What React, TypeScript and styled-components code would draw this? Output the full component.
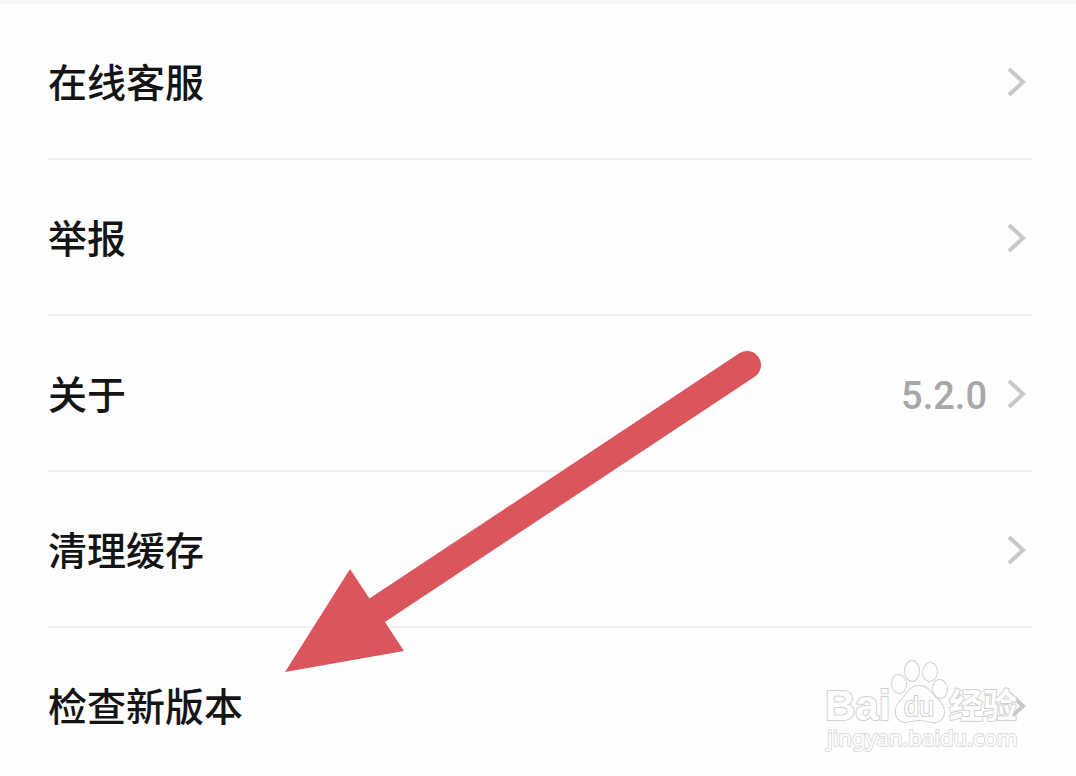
import React from 'react';
import styled, { createGlobalStyle } from 'styled-components';

const GlobalStyle = createGlobalStyle`
  * { box-sizing: border-box; }
  body {
    margin: 0;
    background: #fefefe;
    color: #141414;
    font-family: Roboto, "Noto Sans CJK SC", sans-serif;
  }
`;

const Page = styled.main`
  position: relative;
  min-height: 100vh;
  overflow: hidden;
  border-top: 4px solid #f7f7f7;
`;

const List = styled.ul`
  list-style: none;
  margin: 0;
  padding: 0 44px 0 48px;
`;

const Item = styled.li`
  border-bottom: 2px solid #f0f0f0;

  &:last-child {
    border-bottom: 0;
  }
`;

const RowButton = styled.button`
  display: flex;
  align-items: center;
  width: 100%;
  padding: 46px 5px 48px 0;
  border: 0;
  background: none;
  color: inherit;
  font: inherit;
  text-align: left;
  cursor: pointer;

  ${Item}:last-child & {
    padding-bottom: 36px;
  }
`;

const Label = styled.span`
  flex: 1;
  font-family: "Noto Sans CJK SC", sans-serif;
  font-size: 39px;
  font-weight: 500;
  line-height: 60px;
`;

const Value = styled.span`
  margin-right: 20px;
  padding-top: 8px;
  color: #a8a8a8;
  font-size: 38px;
  font-weight: 500;
  line-height: 52px;
`;

const Chevron = styled.svg`
  width: 20px;
  height: 32px;
  margin-top: 4px;
  fill: none;
  stroke: #c8c8c8;
  stroke-width: 4;
`;

const Pointer = styled.svg`
  position: absolute;
  left: 280px;
  top: 336px;
  width: 490px;
  height: 340px;
  pointer-events: none;
`;

const Watermark = styled.svg`
  position: absolute;
  right: 40px;
  top: 646px;
  width: 220px;
  height: 110px;
  pointer-events: none;
  fill: #fefefe;
  stroke: #d2d2d2;
  stroke-width: 2;
  paint-order: stroke;
`;

const BrandText = styled.text`
  font-family: "Liberation Sans", sans-serif;
  font-size: 42px;
  font-weight: 700;
`;

const PawText = styled.text`
  font-family: "Liberation Sans", sans-serif;
  font-size: 27px;
  font-weight: 400;
`;

const BrandCjk = styled.text`
  font-family: "Noto Sans CJK SC", sans-serif;
  font-size: 34px;
  font-weight: 700;
`;

const AddressText = styled.text`
  font-family: "Noto Sans", sans-serif;
  font-size: 22px;
  font-weight: 400;
  stroke: #dcdcdc;
`;

interface Entry {
  label: string;
  value?: string;
}

const entries: Entry[] = [
  { label: '在线客服' },
  { label: '举报' },
  { label: '关于', value: '5.2.0' },
  { label: '清理缓存' },
  { label: '检查新版本' },
];

function SettingsRow({ label, value }: Entry) {
  return (
    <Item>
      <RowButton type="button">
        <Label>{label}</Label>
        {value && <Value>{value}</Value>}
        <Chevron viewBox="0 0 20 32" aria-hidden="true">
          <path d="M2 3 L16 16 L2 29" />
        </Chevron>
      </RowButton>
    </Item>
  );
}

export default function App() {
  return (
    <>
      <GlobalStyle />
      <Page>
        <List>
          {entries.map((entry) => (
            <SettingsRow key={entry.label} {...entry} />
          ))}
        </List>
        <Pointer viewBox="280 340 490 340" aria-hidden="true">
          <path d="M747 365 L370 615" stroke="#da565c" strokeWidth="28" strokeLinecap="round" />
          <path d="M285 672 L350 569 L404 651 Z" fill="#da565c" />
        </Pointer>
        <Watermark viewBox="816 650 220 110">
          <BrandText x="825" y="720">Bai</BrandText>
          <ellipse cx="899" cy="684" rx="7" ry="9" transform="rotate(-6 899 684)" />
          <ellipse cx="912" cy="671" rx="7" ry="10" />
          <ellipse cx="930" cy="672" rx="7" ry="9" transform="rotate(6 930 672)" />
          <ellipse cx="940" cy="689" rx="7" ry="9" transform="rotate(-8 940 689)" />
          <path d="M919 686 C927 686 931 692 935 697 C940 702 944 706 944 711 C944 719 939 723 932 722 C927 721 923 720 919 720 C914 720 909 722 905 722 C899 721 895 717 896 710 C896 704 900 702 904 697 C908 691 912 686 919 686 Z" />
          <PawText x="904" y="716">du</PawText>
          <BrandCjk x="949" y="718">经验</BrandCjk>
          <AddressText x="827" y="746">jingyan.baidu.com</AddressText>
        </Watermark>
      </Page>
    </>
  );
}
